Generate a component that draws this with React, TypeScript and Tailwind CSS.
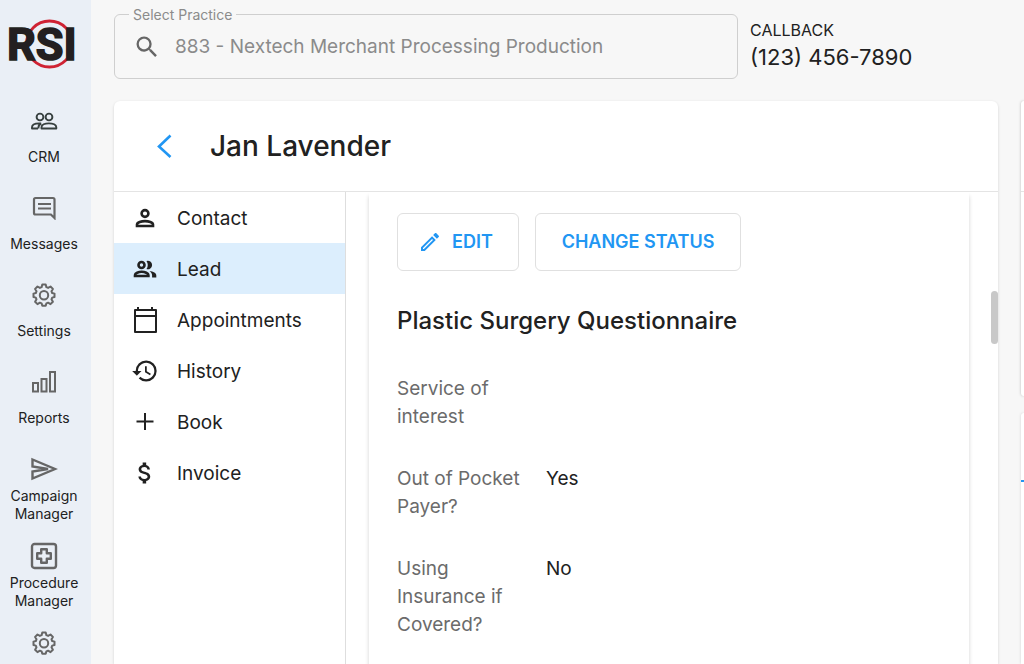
import React from "react";
import { MdAttachMoney, MdHistory, MdOutlineEdit, MdSearch } from "react-icons/md";

function Logo() {
  return (
    <svg viewBox="0 0 70 54" className="h-[54px] w-[70px]" role="img" aria-label="RSI">
      <circle cx="41.5" cy="27" r="23" fill="none" stroke="#cf2233" strokeWidth="2.8" />
      <text
        x="-1"
        y="43"
        fill="#231f20"
        stroke="#231f20"
        strokeWidth="1.6"
        fontFamily="Roboto, sans-serif"
        fontWeight="700"
        fontSize="45"
      >
        RSI
      </text>
    </svg>
  );
}

function CrmIcon() {
  return (
    <svg viewBox="0 0 28 20" className="h-5 w-7" fill="none" stroke="#37403f" strokeWidth="1.9" strokeLinejoin="round">
      <circle cx="10" cy="6" r="3.4" />
      <circle cx="19" cy="6" r="3.4" />
      <path d="M11.5 17.5v-1.2c0-2.4 3.4-3.9 7.4-3.9s7.4 1.5 7.4 3.9v1.2z" />
      <path d="M8 17.5H2v-1.2c0-2.4 3.2-3.9 7.2-3.9h2M8.5 17.5v-1.2c0-1.6 1-2.8 2.8-3.6" />
    </svg>
  );
}

function MessagesIcon() {
  return (
    <svg viewBox="0 0 24 24" className="size-6" fill="none" stroke="#666" strokeWidth="2.2">
      <path d="M22.5 22l-3.6-3.5H3.5A1.5 1.5 0 0 1 2 17V3.5A1.5 1.5 0 0 1 3.5 2H21a1.5 1.5 0 0 1 1.5 1.5z" />
      <path d="M6 8h13M6 12.5h13" />
    </svg>
  );
}

function GearIcon() {
  return (
    <svg viewBox="0 0 24 24" className="size-6" fill="none" stroke="#666" strokeWidth="2" strokeLinejoin="round">
      <path d="M10.3 1.5h3.4l.7 2.7 1.7.7 2.4-1.4 2.4 2.4-1.4 2.4.7 1.7 2.3.6v3.4l-2.3.6-.7 1.7 1.4 2.4-2.4 2.4-2.4-1.4-1.7.7-.7 2.3h-3.4l-.7-2.3-1.7-.7-2.4 1.4-2.4-2.4 1.4-2.4-.7-1.7-2.3-.6v-3.4l2.3-.6.7-1.7-1.4-2.4 2.4-2.4 2.4 1.4 1.7-.7z" />
      <circle cx="12" cy="12.2" r="4.2" />
    </svg>
  );
}

function ReportsIcon() {
  return (
    <svg viewBox="0 0 24 24" className="size-6" fill="none" stroke="#666" strokeWidth="2">
      <rect x="1" y="13" width="5" height="8.5" />
      <rect x="9.5" y="9" width="5" height="12.5" />
      <rect x="18" y="2" width="5" height="19.5" />
    </svg>
  );
}

function CampaignIcon() {
  return (
    <svg viewBox="0 0 28 24" className="h-6 w-7" fill="none" stroke="#666" strokeWidth="2.4">
      <path d="M2.5 2.5L25 12 2.5 21.5v-7L18 12 2.5 9.5z" />
    </svg>
  );
}

function ProcedureIcon() {
  return (
    <svg viewBox="0 0 28 28" className="size-7" fill="none" stroke="#666" strokeWidth="2.4" strokeLinejoin="round">
      <rect x="2" y="2" width="24" height="24" rx="2.5" />
      <path d="M11.2 7.2h5.6v4h4v5.6h-4v4h-5.6v-4h-4v-5.6h4z" />
    </svg>
  );
}

function PersonIcon() {
  return (
    <svg viewBox="0 0 28 28" className="size-7" fill="none" stroke="#212121" strokeWidth="2.6">
      <circle cx="14" cy="9.5" r="3.4" />
      <path d="M6 22v-1.4c0-2.2 4.4-3.5 8-3.5s8 1.3 8 3.5V22z" />
    </svg>
  );
}

function PeopleIcon() {
  return (
    <svg viewBox="0 0 28 28" className="size-7" fill="none" stroke="#212121" strokeWidth="2.6">
      <circle cx="10.5" cy="10" r="3" />
      <path d="M4 21v-1c0-1.9 3.5-3.2 6.7-3.2s6.7 1.3 6.7 3.2v1z" />
      <path d="M15.5 5.9a4.3 4.3 0 1 1 0 8.2c1.7-2.3 1.7-5.9 0-8.2z" fill="#212121" stroke="none" />
      <path d="M18.5 16c3.8.5 6.8 2 6.8 4.5v2h-4.2v-2c0-1.9-1-3.4-2.6-4.5z" fill="#212121" stroke="none" />
    </svg>
  );
}

function CalendarIcon() {
  return (
    <svg viewBox="0 0 28 28" className="size-7" fill="none" stroke="#212121" strokeWidth="2" strokeLinejoin="round">
      <rect x="4" y="4" width="21" height="22" />
      <path d="M4 10h21M7 1v3M21 1v3" />
    </svg>
  );
}

function PlusIcon() {
  return (
    <svg viewBox="0 0 28 28" className="size-7" fill="none" stroke="#212121" strokeWidth="2">
      <path d="M14 5v17M5.5 13.5h17" />
    </svg>
  );
}

const sections = [
  { label: "CRM", icon: <CrmIcon /> },
  { label: "Messages", icon: <MessagesIcon /> },
  { label: "Settings", icon: <GearIcon /> },
  { label: "Reports", icon: <ReportsIcon /> },
  { label: "Campaign Manager", icon: <CampaignIcon /> },
  { label: "Procedure Manager", icon: <ProcedureIcon /> },
  { label: "", icon: <GearIcon /> },
];

const tabs = [
  { label: "Contact", icon: <PersonIcon /> },
  { label: "Lead", icon: <PeopleIcon />, active: true },
  { label: "Appointments", icon: <CalendarIcon /> },
  { label: "History", icon: <MdHistory size={28} /> },
  { label: "Book", icon: <PlusIcon /> },
  { label: "Invoice", icon: <MdAttachMoney size={28} /> },
];

const answers = [
  { question: "Service of interest", answer: "" },
  { question: "Out of Pocket Payer?", answer: "Yes" },
  { question: "Using Insurance if Covered?", answer: "No" },
];

export default function App() {
  return (
    <div className="flex h-screen overflow-hidden bg-[#f7f7f7] font-['Inter',sans-serif] text-[#212121]">
      <nav className="flex w-[91px] shrink-0 flex-col overflow-hidden bg-[#eaeff6]">
        <a href="#home" className="mt-[17px] ml-2 block">
          <Logo />
        </a>
        <ul className="mt-9">
          {sections.map((s, i) => (
            <li key={i} className="h-[87px]">
              <a href="#section" aria-label={s.label || "More settings"} className="flex flex-col items-center gap-1 pr-[3px]">
                <span className="flex h-7 items-center">{s.icon}</span>
                <span className="flex h-9 items-center text-center text-sm leading-[18px]">{s.label}</span>
              </a>
            </li>
          ))}
        </ul>
      </nav>

      <div className="flex min-w-0 flex-1 flex-col pl-[23px]">
        <header className="flex gap-3 pt-1.5">
          <fieldset className="h-[73px] w-[624px] min-w-0 rounded-md border border-[#cfcfcf] pl-3.5">
            <legend className="px-1 text-sm leading-[17px] text-[#8b8b8b]">
              <label htmlFor="practice">Select Practice</label>
            </legend>
            <div className="flex h-12 items-center gap-3.5 pl-1">
              <MdSearch size={28} className="shrink-0 text-[#666]" />
              <input
                id="practice"
                defaultValue="883 - Nextech Merchant Processing Production"
                className="min-w-0 flex-1 bg-transparent text-[19px] leading-7 text-[#8b8b8b] outline-none"
              />
            </div>
          </fieldset>
          <div className="pt-3">
            <p className="text-base leading-6">CALLBACK</p>
            <p className="text-[22px] leading-[30px]">(123) 456-7890</p>
          </div>
        </header>

        <div className="mt-[22px] flex min-h-0 flex-1 gap-[23px]">
          <main className="relative flex min-w-0 flex-1 flex-col rounded-t-md bg-white shadow-[0_1px_3px_rgba(0,0,0,0.15)]">
            <div className="flex h-[91px] shrink-0 items-center border-b border-[#e4e4e4] pl-[39px]">
              <button aria-label="Back" className="flex w-[57px]">
                <svg viewBox="0 0 24 24" className="size-6" fill="none" stroke="#2196f3" strokeWidth="2.6">
                  <path d="M17.5 1.5L6 12.5 17.5 23" />
                </svg>
              </button>
              <h1 className="text-[28px] leading-9 font-medium">Jan Lavender</h1>
            </div>
            <div className="flex min-h-0 flex-1">
              <ul className="w-[232px] shrink-0 border-r border-[#dedede]">
                {tabs.map((t) => (
                  <li key={t.label}>
                    <a
                      href="#tab"
                      className={
                        t.active
                          ? "flex h-[51px] items-center gap-[18px] bg-[#dceefd] pl-[17px] text-[19px]"
                          : "flex h-[51px] items-center gap-[18px] pl-[17px] text-[19px]"
                      }
                    >
                      <span className="flex w-7 justify-center">{t.icon}</span>
                      <span className="pt-[3px]">{t.label}</span>
                    </a>
                  </li>
                ))}
              </ul>
              <section className="mr-[29px] ml-[23px] flex-1 overflow-hidden px-7 pt-[21px] shadow-[0_4px_4px_rgba(0,0,0,0.18)]">
                <div className="flex gap-4">
                  <button className="flex h-[58px] min-w-[122px] items-center gap-2.5 rounded-md border border-[#e0e0e0] px-5 text-lg font-semibold text-[#2196f3]">
                    <MdOutlineEdit size={24} />
                    EDIT
                  </button>
                  <button className="h-[58px] min-w-[206px] rounded-md border border-[#e0e0e0] text-lg font-semibold text-[#2196f3]">
                    CHANGE STATUS
                  </button>
                </div>
                <h2 className="mt-8 text-2xl leading-9 font-medium">Plastic Surgery Questionnaire</h2>
                <dl className="mt-9 flex flex-col gap-[34px] text-[19px] leading-7">
                  {answers.map((a) => (
                    <div key={a.question} className="flex">
                      <dt className="w-[149px] pr-5 text-[#6b6b6b]">{a.question}</dt>
                      <dd>{a.answer}</dd>
                    </div>
                  ))}
                </dl>
              </section>
            </div>
            <div className="absolute top-[190px] right-0 h-[53px] w-[7px] rounded-full bg-[#c8c8c8]" />
          </main>

          <aside className="flex w-[3px] shrink-0 flex-col gap-[17px]">
            <div className="h-[295px] rounded-l-md bg-white shadow-[0_0_3px_rgba(0,0,0,0.25)]">
              <div className="h-[91px] border-b border-[#e4e4e4]" />
            </div>
            <div className="flex-1 rounded-tl-md bg-white shadow-[0_0_3px_rgba(0,0,0,0.15)]">
              <div className="h-[69px] border-b-2 border-[#2196f3]" />
            </div>
          </aside>
        </div>
      </div>
    </div>
  );
}
